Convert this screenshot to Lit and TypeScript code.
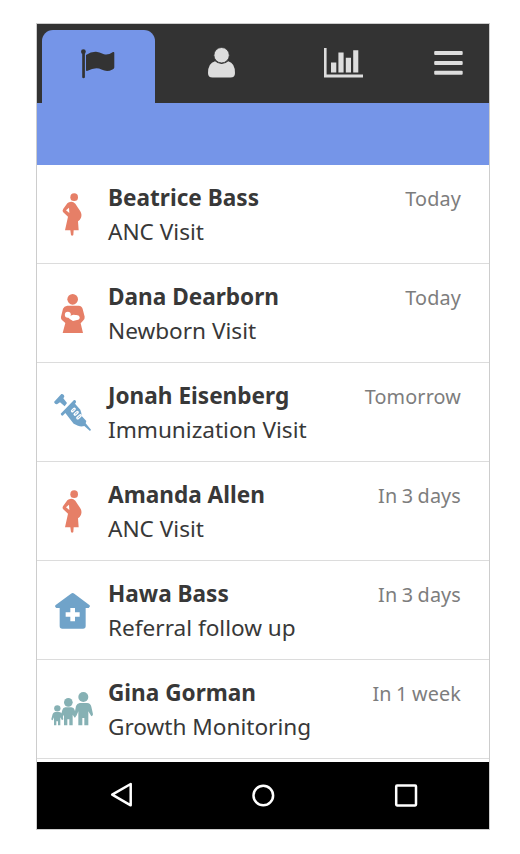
import { LitElement, html, svg, css } from "lit";
import { customElement, property } from "lit/decorators.js";

const icons: Record<string, { box: string; art: unknown }> = {
  pregnant: {
    box: "15 30 132 144",
    art: svg`<g fill="#e67f67"><circle cx="87.500" cy="51.500" r="11.500"/>
      <path fill-rule="evenodd" d="M75 66Q84 64 91 71Q98 82 105 92Q112 102 108 113Q105 120 99 124L101 151H86L85 165Q81 170 78 165L76 151H60L69 110L54 96Q51 91 55 86L67 70Q70 67 75 66ZM72 83L63 91L73 99Z"/></g>`,
  },
  newborn: {
    box: "15 27 132 144",
    art: svg`<circle cx="83" cy="58" r="16" fill="#e67f67"/>
      <path fill="#e67f67" d="M67 77H101Q111 78 113 87L119 110Q120 117 114 122L107 130L114 159H53L61 129L50 119Q47 115 48 110L54 86Q57 78 67 77Z"/>
      <g fill="#fff"><circle cx="68.500" cy="104.500" r="9"/><path d="M75 109Q82 102 91 105Q102 104 104 111Q105 119 96 120L84 123Q74 119 69 112Z"/></g>`,
  },
  syringe: {
    box: "15 24 132 144",
    art: svg`<g fill="#70a3c9"><path d="M27 66L49 42Q53 41 57 46Q60 50 55 55L66 69L59 79L45 67L36 73Q30 74 27 66Z"/>
      <path d="M47 101L87 60Q91 59 93 64Q94 68 90 71L106 89Q110 99 110 108L124 123L122 130L138 149L135 153L118 138Q108 141 99 137L86 131L61 99L53 107Q48 107 47 101Z"/></g>
      <path fill="none" d="M82 93L88 87M90 103L97 97M98 114L106 107" stroke="#fff" stroke-width="9" stroke-linecap="round"/>
      <path fill="none" d="M83 92L87 88M91 102L96 98M99 113L105 108" stroke="#8fb5d4" stroke-width="3" stroke-linecap="round"/>`,
  },
  house: {
    box: "15 18 132 144",
    art: svg`<path fill="#70a3c9" d="M78 41Q83 37 88 41L134 76Q137 80 131 84H122V138Q122 146 114 146H52Q44 146 44 138V84H34Q28 81 31 76Z"/>
      <path fill="#fff" d="M76 84H90V97H104V110H90V124H76V110H62V97H76Z"/>`,
  },
  children: {
    box: "15 15 132 144",
    art: svg`<g fill="#86b1b4">
      <circle cx="115" cy="51" r="15"/><path d="M104 69H126Q137 70 139 80L144 103Q144 108 139 109L130 94V136H118V114H112V136H100V94L94 108Q88 107 89 99L93 78Q96 70 104 69Z"/>
      <circle cx="70" cy="67" r="13"/><path d="M61 82H79Q87 83 89 90L93 107Q93 112 89 113L83 104V136H73V118H67V136H57V104L51 114Q46 111 48 106L52 90Q54 83 61 82Z"/>
      <circle cx="37" cy="85" r="9.500"/><path d="M30 96H43Q50 97 52 103L55 118L51 121L46 112V136H39V124H34V136H27V112L23 121Q19 121 19 117L23 102Q25 97 30 96Z"/></g>`,
  },
};

const visits = [
  { icon: "pregnant", name: "Beatrice Bass", task: "ANC Visit", due: "Today" },
  { icon: "newborn", name: "Dana Dearborn", task: "Newborn Visit", due: "Today" },
  { icon: "syringe", name: "Jonah Eisenberg", task: "Immunization Visit", due: "Tomorrow" },
  { icon: "pregnant", name: "Amanda Allen", task: "ANC Visit", due: "In 3 days" },
  { icon: "house", name: "Hawa Bass", task: "Referral follow up", due: "In 3 days" },
  { icon: "children", name: "Gina Gorman", task: "Growth Monitoring", due: "In 1 week" },
];

@customElement("visit-row")
class VisitRow extends LitElement {
  @property() icon = "";
  @property() name = "";
  @property() task = "";
  @property() due = "";
  static styles = css`
    :host { display: flex; box-sizing: border-box; height: 99px; padding: 16px 28px 0 13px; border-bottom: 1px solid #dcdcdc; }
    .icon { width: 44px; height: 48px; margin: 9px 14px 0 0; flex: none; }
    .text { flex: 1; color: #383838; font-size: 22.600px; line-height: 34px; white-space: nowrap; }
    .name { font-weight: 700; }
    .due { color: #7d7d7d; font-size: 19.800px; line-height: 36px; letter-spacing: 0.150px; word-spacing: -0.900px; }
  `;
  render() {
    const i = icons[this.icon];
    return html`<svg class="icon" viewBox=${i.box}>${i.art}</svg>
      <div class="text"><div class="name">${this.name}</div><div>${this.task}</div></div>
      <div class="due">${this.due}</div>`;
  }
}

@customElement("app-root")
class AppRoot extends LitElement {
  static styles = css`
    :host { display: block; box-sizing: border-box; height: 854px; padding: 23px 30px 24px 36px; background: #fff; font-family: "Noto Sans", sans-serif; }
    .phone { display: flex; flex-direction: column; box-sizing: border-box; height: 807px; border: 1px solid #cdcdcd; overflow: hidden; }
    .tabs { height: 79px; flex: none; display: flex; padding-left: 5px; background: #333; }
    .tab { width: 113px; height: 73px; flex: none; margin-top: 6px; border-radius: 11px 11px 0 0; }
    .active { background: #7595e8; }
    .tab svg, .nav svg { display: block; width: 100%; height: 100%; }
    .banner { height: 62px; flex: none; background: #7595e8; }
    .list { flex: 1; min-height: 0; overflow: hidden; }
    .nav { height: 67px; flex: none; background: #000; }
  `;
  render() {
    return html`<div class="phone">
      <div class="tabs">
        <div class="tab active"><svg viewBox="42 30 113 73" fill="#333"><circle cx="83.400" cy="51.700" r="2.400"/><path d="M82.200 52H84.900V77.500Q83.500 79 82.200 77.500ZM86 55Q91 51.500 96 51.700Q99 52 104 54.200Q108 55.500 113 52Q114.300 51.500 114.300 53V67.500Q114.300 69 112 69.800Q107 72.300 101.500 69.500Q96 66.200 87 71Q86 71.200 86 70Z"/></svg></div>
        <div class="tab"><svg viewBox="155 30 113 73" fill="#ddd"><path d="M215 61.200Q221.600 67 228.300 61.200Q235 63 235 73Q235 77.500 230.500 77.500H212.500Q208 77.500 208 73Q208 63 215 61.200Z"/><circle cx="221.600" cy="55.200" r="7.700" stroke="#333" stroke-width="0.800"/></svg></div>
        <div class="tab"><svg viewBox="268 30 113 73" fill="#ddd"><path d="M324 48H326.600V74.600H363V77.400H324ZM331 62.600H336.300V72.600H331ZM338.400 52.600H343.600V72.600H338.400ZM345.800 57.800H351V72.600H345.800ZM353.200 50.300H358.300V72.600H353.200Z"/></svg></div>
        <div class="tab"><svg viewBox="381 30 113 73" fill="#ddd"><rect x="434.200" y="51" width="28.500" height="4" rx="1"/><rect x="434.200" y="61" width="28.500" height="4" rx="1"/><rect x="434.200" y="70.800" width="28.500" height="4" rx="1"/></svg></div>
      </div>
      <div class="banner"></div>
      <div class="list">${visits.map((v) => html`<visit-row .icon=${v.icon} .name=${v.name} .task=${v.task} .due=${v.due}></visit-row>`)}</div>
      <div class="nav"><svg viewBox="37 762 452 67" fill="none" stroke="#fff" stroke-width="2.500" stroke-linejoin="round"><path d="M112.200 794.700L130.700 784V805.300Z"/><circle cx="263.300" cy="795.500" r="9.800"/><rect x="396.200" y="785.600" width="19.800" height="19.800" rx="0.800"/></svg></div>
    </div>`;
  }
}
